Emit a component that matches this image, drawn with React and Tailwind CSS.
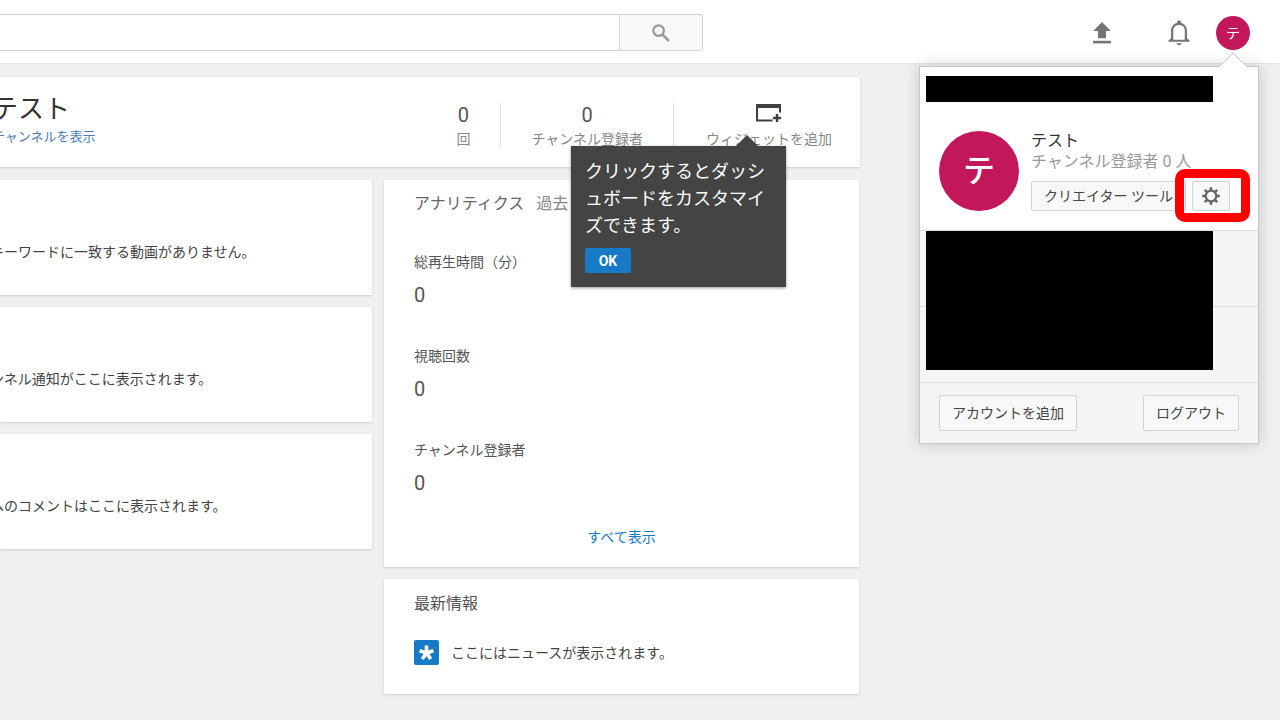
import React from "react";

const card = "bg-white shadow-[0_1px_2px_rgba(0,0,0,0.15)]";
const greyButton =
  "flex items-center justify-center rounded-xs border border-[#d3d3d3] bg-[#f8f8f8] text-sm text-[#444]";

function SearchIcon() {
  return (
    <svg width="18" height="18" viewBox="0 0 18 18" fill="none" stroke="#999" aria-hidden="true">
      <circle cx="6.6" cy="6.6" r="5.3" strokeWidth="2.2" />
      <path d="M10.6 10.6 17 17" strokeWidth="2.6" />
    </svg>
  );
}

function UploadIcon() {
  return (
    <svg width="20" height="24" viewBox="0 0 20 24" fill="#757575" aria-hidden="true">
      <path d="M10 1 18.8 10H14V17.3H6V10H1.2Z" />
      <path d="M1 19.8h18v2.6H1z" />
    </svg>
  );
}

function BellIcon() {
  return (
    <svg width="22" height="26" viewBox="0 0 22 26" aria-hidden="true">
      <path
        d="M4.1 20.6V11C4.1 6.6 6.900 3.800 11 3.800s6.900 2.800 6.900 7.200v9.600"
        fill="none"
        stroke="#757575"
        strokeWidth="2.2"
      />
      <path
        d="M9.1 4.200V2.100a1.900 1.900 0 0 1 3.800 0v2.100zM3 18.200h2.200v1.600h11.600v-1.600H19l2.600 2.200v1.400H.4v-1.400zM8.2 23.200h5.600c-.5 1.3-1.5 2-2.8 2s-2.3-.7-2.8-2z"
        fill="#757575"
      />
    </svg>
  );
}

function WidgetIcon() {
  return (
    <svg width="26" height="20" viewBox="0 0 26 20" aria-hidden="true">
      <path d="M0 1h25v8.500h-2V5H2v11.500h14.500v2H0z" fill="#404040" />
      <path d="M19.800 11h2.400v2.800h2.900v2.400h-2.900V19h-2.400v-2.800h-2.900v-2.400h2.900z" fill="#404040" />
    </svg>
  );
}

function GearIcon() {
  return (
    <svg width="18" height="18" viewBox="0 0 18 18" aria-hidden="true">
      <circle cx="9" cy="9" r="5.3" fill="none" stroke="#666" strokeWidth="2.2" />
      <g stroke="#666" strokeWidth="2.6">
        <path d="M9 .2v3.3M9 14.5v3.3M.2 9h3.3M14.5 9h3.3" />
        <path d="M2.8 2.8l2.3 2.3M12.9 12.9l2.3 2.3M2.8 15.2l2.3-2.3M12.9 5.1l2.3-2.3" />
      </g>
    </svg>
  );
}

function NewsIcon() {
  return (
    <span className="flex size-[25px] items-center justify-center rounded-xs bg-[#167ac6]">
      <svg width="17" height="17" viewBox="0 0 16 16" stroke="#fff" strokeWidth="3.4" aria-hidden="true">
        <path d="M8 8.500V1.500M8 8.500 1.500 6.300M8 8.500l6.500-2.200M8 8.500l-4 5.600M8 8.500l4 5.600" />
      </svg>
    </span>
  );
}

function AccountMenu() {
  return (
    <section
      aria-label="アカウント"
      className="absolute top-[66px] right-[21px] z-20 w-[340px] border border-[#c5c5c5] bg-[#f5f5f5] shadow-[0_0_15px_rgba(0,0,0,0.18)]"
    >
      <svg className="absolute -top-[15px] right-[10px]" width="30" height="16" viewBox="0 0 30 16" aria-hidden="true">
        <path d="M0 16 15 1 30 16" fill="#fff" />
        <path d="M1 15 15 1 29 15" fill="none" stroke="#ccc" />
      </svg>
      <div className="border-b border-[#ddd] bg-white pt-[9px] pb-[19px]">
        <div className="ml-[6px] h-[26px] w-[287px] bg-black" />
        <div className="mt-[29px] flex gap-3 px-[19px]">
          <div className="flex size-20 shrink-0 items-center justify-center rounded-full bg-[#c2185b] text-[32px] font-medium text-white">
            テ
          </div>
          <div>
            <p className="text-base leading-5 text-[#333]">テスト</p>
            <p className="text-base leading-[22px] whitespace-nowrap text-[#999]">チャンネル登録者 0 人</p>
            <div className="mt-2 flex gap-[6px]">
              <button type="button" className={`${greyButton} h-[30px] w-[155px] whitespace-nowrap`}>
                クリエイター ツール
              </button>
              <div className="relative">
                <button type="button" aria-label="設定" className={`${greyButton} h-[30px] w-[38px]`}>
                  <GearIcon />
                </button>
                <div className="pointer-events-none absolute -top-3 -left-[17px] h-[53px] w-[75px] rounded-[10px] border-[9px] border-[#fe0000]" />
              </div>
            </div>
          </div>
        </div>
      </div>
      <div className="relative">
        <div className="h-[76px] border-b border-[#ddd]" />
        <div className="h-[76px] border-b border-[#ddd]" />
        <div className="absolute top-0 left-[6px] h-[139px] w-[287px] bg-black" />
      </div>
      <div className="flex justify-between px-[19px] py-3">
        <button type="button" className={`${greyButton} h-9 px-3`}>
          アカウントを追加
        </button>
        <button type="button" className={`${greyButton} h-9 px-3`}>
          ログアウト
        </button>
      </div>
    </section>
  );
}

function TopBar() {
  return (
    <header className="relative flex h-16 items-center justify-between border-b border-[#e8e8e8] bg-white pt-[2px] pr-[30px]">
      <form className="flex h-[37px] w-full max-w-[703px]" onSubmit={(e) => e.preventDefault()}>
        <input
          type="search"
          aria-label="検索"
          className="min-w-0 flex-1 border-y border-[#ccc] px-3 text-base outline-none"
        />
        <button
          type="submit"
          aria-label="検索を実行"
          className="flex w-21 items-center justify-center rounded-r-xs border border-[#d3d3d3] bg-[#f8f8f8]"
        >
          <SearchIcon />
        </button>
      </form>
      <div className="flex items-center">
        <button type="button" aria-label="アップロード" className="mr-14">
          <UploadIcon />
        </button>
        <button type="button" aria-label="通知" className="mr-[26px]">
          <BellIcon />
        </button>
        <button
          type="button"
          aria-label="アカウント テ"
          className="flex size-[34px] items-center justify-center rounded-full bg-[#c2185b] text-sm text-white"
        >
          テ
        </button>
      </div>
      <AccountMenu />
    </header>
  );
}

function Tooltip() {
  return (
    <div
      role="tooltip"
      className="absolute top-[69px] right-[74px] z-10 w-[215px] bg-[#444] px-[14px] pt-3 pb-[14px] shadow-[0_1px_3px_rgba(0,0,0,0.4)]"
    >
      <svg className="absolute -top-[11px] right-[28px]" width="22" height="11" viewBox="0 0 22 11" aria-hidden="true">
        <path d="M0 11 11 0l11 11z" fill="#444" />
      </svg>
      <p className="text-lg leading-[27px] whitespace-nowrap text-white">
        クリックするとダッシ
        <br />
        ュボードをカスタマイ
        <br />
        ズできます。
      </p>
      <button type="button" className="mt-[9px] block h-[25px] w-[46px] rounded-xs bg-[#167ac6] text-sm font-bold text-white">
        OK
      </button>
    </div>
  );
}

function ChannelHeader() {
  return (
    <section className={`relative flex h-[90px] justify-between ${card}`}>
      <div className="-ml-2 pt-[14px]">
        <h1 className="text-[26px] leading-9 text-[#333]">テスト</h1>
        <a href="#channel" className="block text-[13px] leading-5 text-[#4a7ebb]">
          チャンネルを表示
        </a>
      </div>
      <div className="flex pt-[26px] text-center text-sm leading-5 text-[#888]">
        <div className="h-11 px-[30px]">
          <p className="mb-[2px] text-xl leading-6 text-[#555]">0</p>
          <p>回</p>
        </div>
        <div className="h-11 border-l border-[#ddd] px-[30px]">
          <p className="mb-[2px] text-xl leading-6 text-[#555]">0</p>
          <p>チャンネル登録者</p>
        </div>
        <button type="button" className="flex h-11 flex-col items-center border-l border-[#ddd] pr-7 pl-8">
          <span className="mb-[2px] flex h-6 shrink-0 items-start">
            <WidgetIcon />
          </span>
          <span>ウィジェットを追加</span>
        </button>
      </div>
      <Tooltip />
    </section>
  );
}

const messages = [
  "キーワードに一致する動画がありません。",
  "ンネル通知がここに表示されます。",
  "へのコメントはここに表示されます。",
];

const metrics = [
  { label: "総再生時間（分）", value: 0 },
  { label: "視聴回数", value: 0 },
  { label: "チャンネル登録者", value: 0 },
];

export default function App() {
  return (
    <div className="min-h-screen overflow-x-hidden bg-[#f0f0f0] font-['Roboto','Noto_Sans_CJK_JP',sans-serif] text-[#444]">
      <TopBar />
      <main className="flex max-w-[860px] flex-col gap-[13px] pt-[13px] pb-6">
        <ChannelHeader />
        <div className="grid grid-cols-[372fr_475fr] items-start gap-3 pr-px">
          <div className="flex flex-col gap-3">
            {messages.map((message) => (
              <section key={message} className={`h-[115px] pt-[62px] ${card}`}>
                <p className="-ml-[10px] text-sm leading-5 whitespace-nowrap">{message}</p>
              </section>
            ))}
          </div>
          <div className="flex flex-col gap-3">
            <section className={`px-[30px] pt-3 pb-5 ${card}`}>
              <h2 className="text-base leading-6 text-[#666]">
                アナリティクス<span className="ml-3 text-[#888]">過去</span>
              </h2>
              <dl className="mt-9 flex flex-col gap-[37px]">
                {metrics.map((metric) => (
                  <div key={metric.label}>
                    <dt className="text-sm leading-5 text-[#555]">{metric.label}</dt>
                    <dd className="mt-[9px] text-xl leading-7 text-[#555]">{metric.value}</dd>
                  </div>
                ))}
              </dl>
              <a href="#analytics" className="mt-[30px] block text-center text-sm leading-5 text-[#167ac6]">
                すべて表示
              </a>
            </section>
            <section className={`px-[30px] pt-[13px] pb-[29px] ${card}`}>
              <h2 className="text-base leading-6 text-[#555]">最新情報</h2>
              <div className="mt-6 flex items-center gap-3">
                <NewsIcon />
                <p className="text-sm leading-6">ここにはニュースが表示されます。</p>
              </div>
            </section>
          </div>
        </div>
      </main>
    </div>
  );
}
